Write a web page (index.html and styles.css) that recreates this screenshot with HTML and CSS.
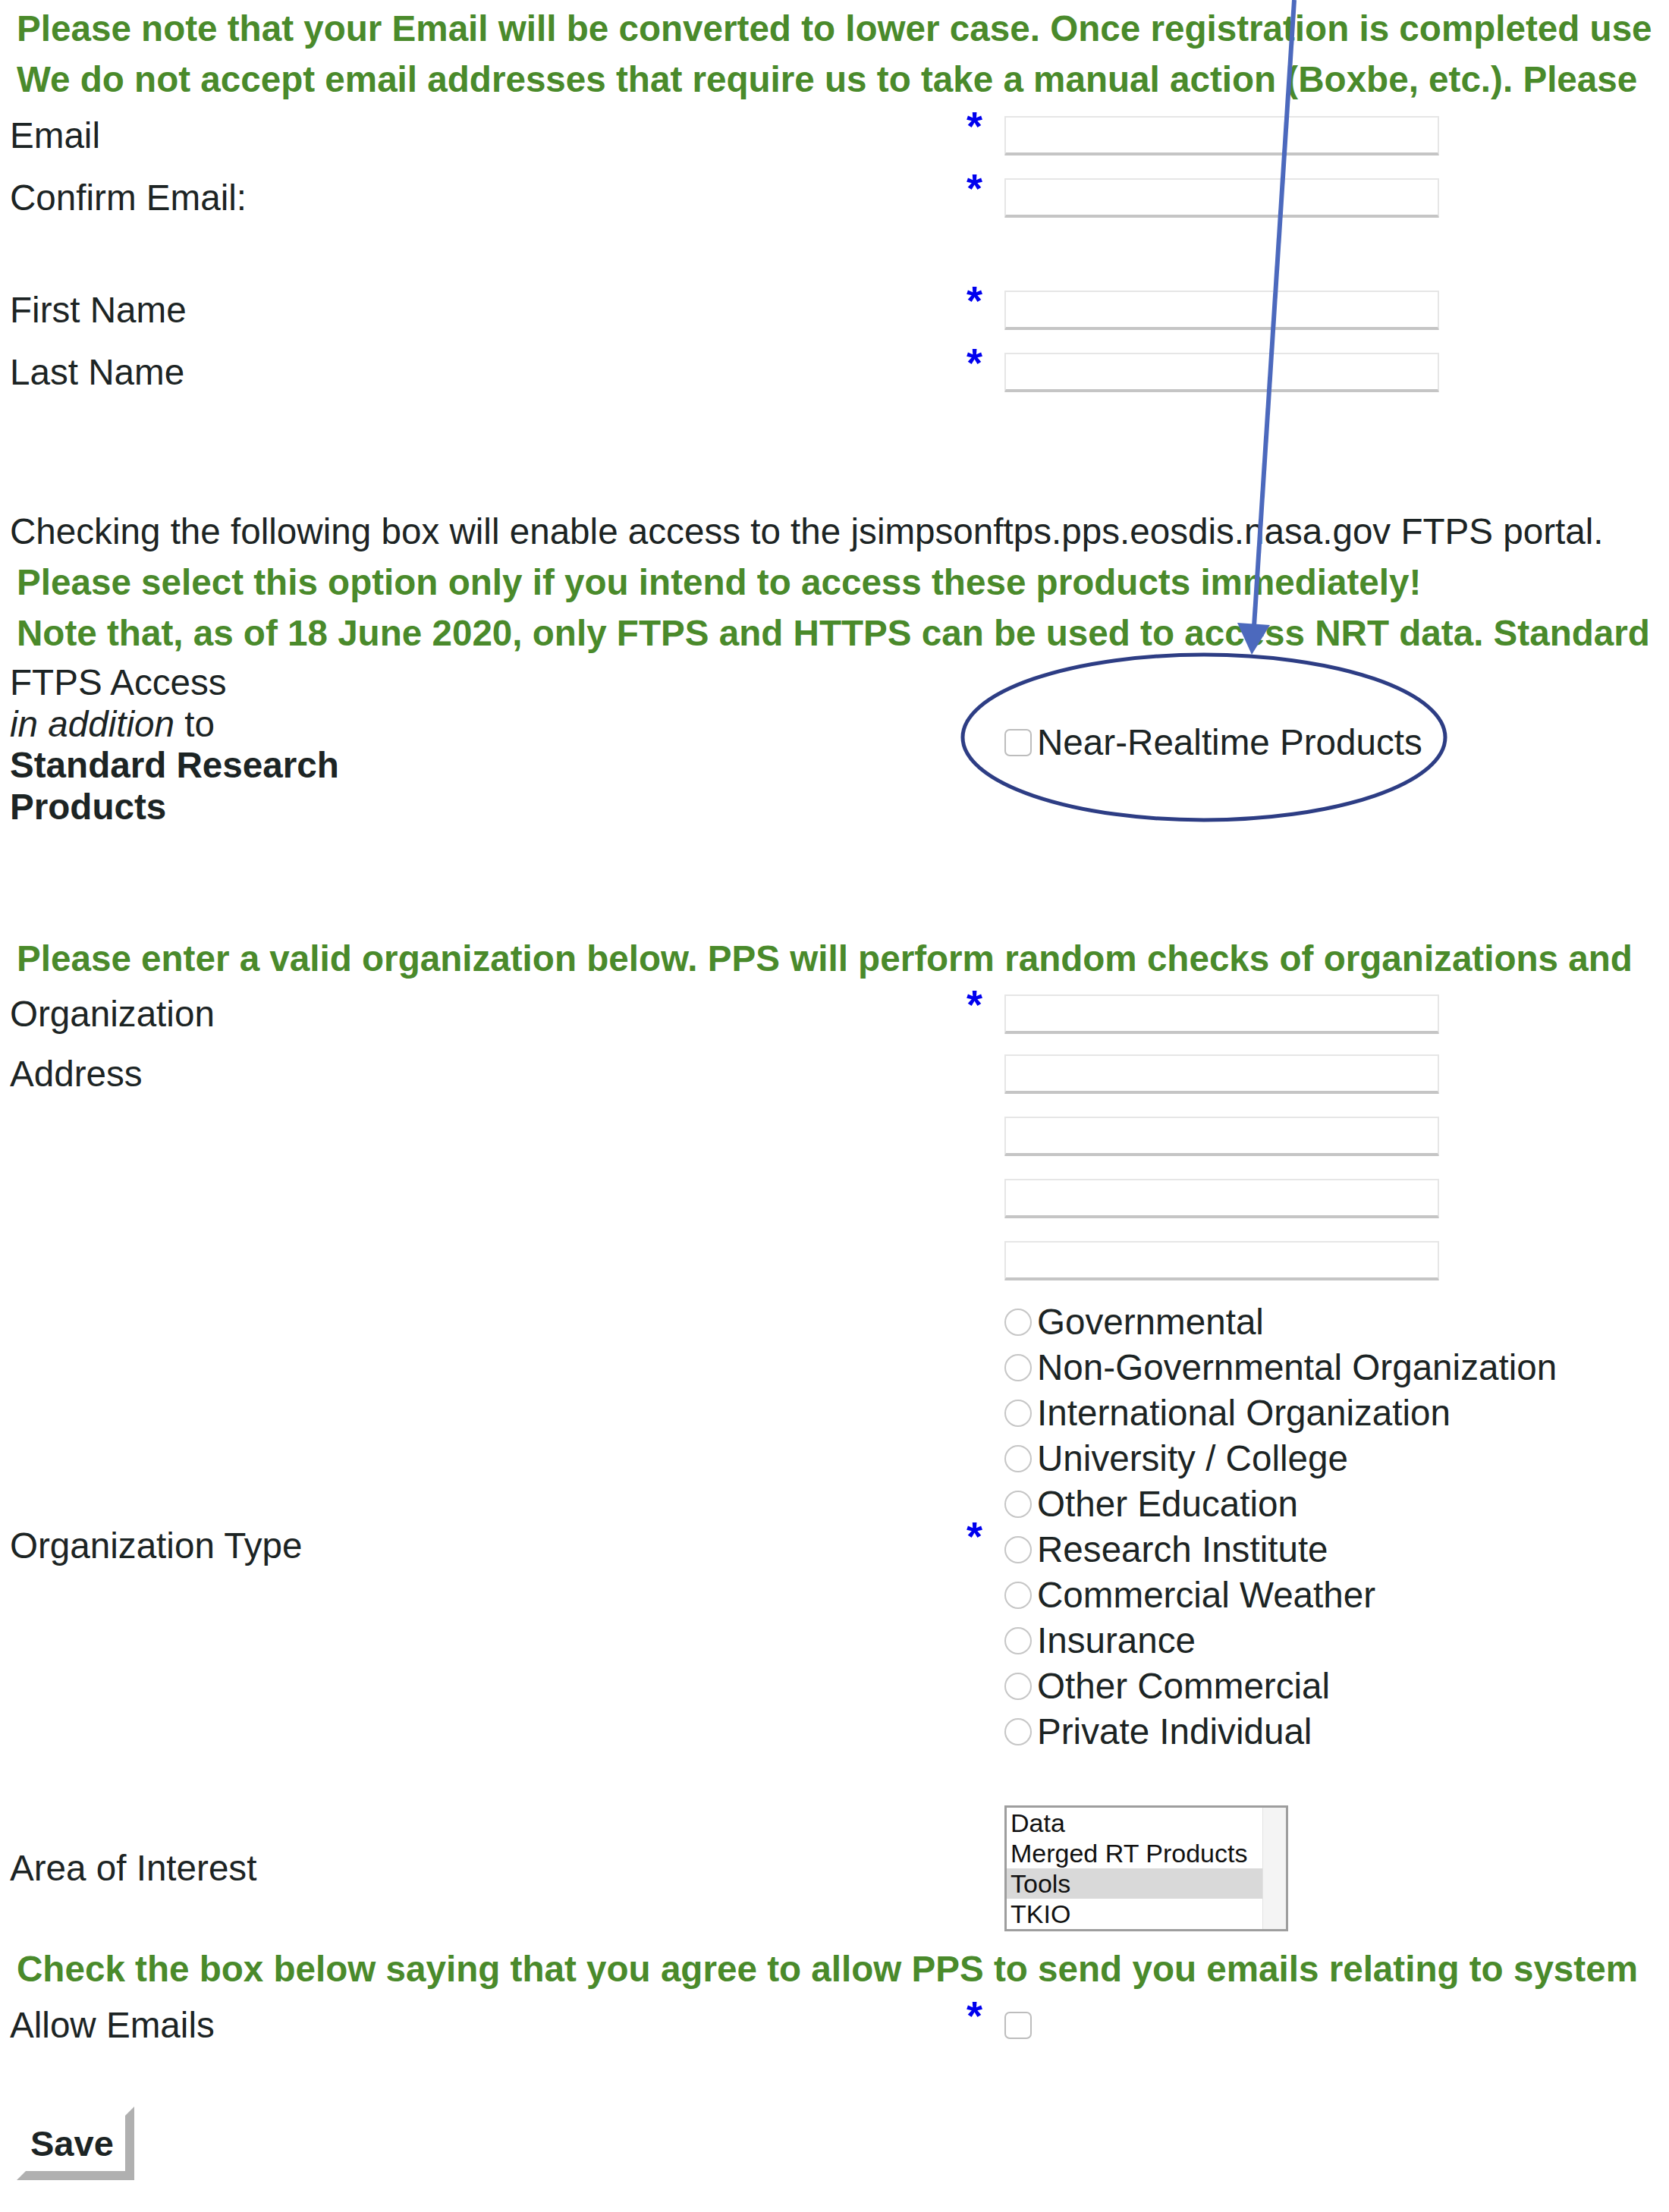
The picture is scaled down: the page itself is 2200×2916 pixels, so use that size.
FILE: index.html
```html
<!DOCTYPE html>
<html lang="en">
<head>
<meta charset="utf-8">
<title>Registration</title>
<link rel="stylesheet" href="styles.css">
</head>
<body>
<form class="page">
  <p class="note">Please note that your Email will be converted to lower case. Once registration is completed use</p>
  <p class="note">We do not accept email addresses that require us to take a manual action (Boxbe, etc.). Please</p>

  <div class="row row-field">
    <div class="label">Email</div>
    <div class="req">*</div>
    <div class="field"><input class="text-input" type="text"></div>
  </div>
  <div class="row row-field">
    <div class="label">Confirm Email:</div>
    <div class="req">*</div>
    <div class="field"><input class="text-input" type="text"></div>
  </div>

  <div class="row row-field gap-66">
    <div class="label">First Name</div>
    <div class="req">*</div>
    <div class="field"><input class="text-input" type="text"></div>
  </div>
  <div class="row row-field">
    <div class="label">Last Name</div>
    <div class="req">*</div>
    <div class="field"><input class="text-input" type="text"></div>
  </div>

  <p class="plain gap-135">Checking the following box will enable access to the jsimpsonftps.pps.eosdis.nasa.gov FTPS portal.</p>
  <p class="note">Please select this option only if you intend to access these products immediately!</p>
  <p class="note">Note that, as of 18 June 2020, only FTPS and HTTPS can be used to access NRT data. Standard</p>

  <div class="row row-ftps">
    <div class="label label-multi">FTPS Access<br><i>in addition</i> to<br><b>Standard Research</b><br><b>Products</b></div>
    <div class="req-empty"></div>
    <div class="field field-ftps"><label class="choice"><input class="box" type="checkbox">Near-Realtime Products</label></div>
  </div>

  <p class="note gap-139">Please enter a valid organization below. PPS will perform random checks of organizations and</p>

  <div class="row row-org">
    <div class="label">Organization</div>
    <div class="req">*</div>
    <div class="field"><input class="text-input" type="text"></div>
  </div>
  <div class="row row-address">
    <div class="label label-address">Address</div>
    <div class="req-empty"></div>
    <div class="field field-stack">
      <input class="text-input" type="text">
      <input class="text-input" type="text">
      <input class="text-input" type="text">
      <input class="text-input" type="text">
    </div>
  </div>

  <div class="row row-type">
    <div class="label">Organization Type</div>
    <div class="req">*</div>
    <div class="field radio-list">
      <label class="choice radio-line"><input class="dot" type="radio" name="orgtype">Governmental</label>
      <label class="choice radio-line"><input class="dot" type="radio" name="orgtype">Non-Governmental Organization</label>
      <label class="choice radio-line"><input class="dot" type="radio" name="orgtype">International Organization</label>
      <label class="choice radio-line"><input class="dot" type="radio" name="orgtype">University / College</label>
      <label class="choice radio-line"><input class="dot" type="radio" name="orgtype">Other Education</label>
      <label class="choice radio-line"><input class="dot" type="radio" name="orgtype">Research Institute</label>
      <label class="choice radio-line"><input class="dot" type="radio" name="orgtype">Commercial Weather</label>
      <label class="choice radio-line"><input class="dot" type="radio" name="orgtype">Insurance</label>
      <label class="choice radio-line"><input class="dot" type="radio" name="orgtype">Other Commercial</label>
      <label class="choice radio-line"><input class="dot" type="radio" name="orgtype">Private Individual</label>
    </div>
  </div>

  <div class="row row-area">
    <div class="label">Area of Interest</div>
    <div class="req-empty"></div>
    <div class="field">
      <div class="listbox">
        <ul class="options">
          <li>Data</li>
          <li>Merged RT Products</li>
          <li class="selected">Tools</li>
          <li>TKIO</li>
        </ul>
        <div class="scrolltrack"></div>
      </div>
    </div>
  </div>

  <p class="note">Check the box below saying that you agree to allow PPS to send you emails relating to system</p>

  <div class="row row-field">
    <div class="label">Allow Emails</div>
    <div class="req">*</div>
    <div class="field"><input class="box" type="checkbox"></div>
  </div>

  <button class="save" type="button">Save</button>
</form>

<svg class="annot" width="2200" height="1100" viewBox="0 0 2200 1100" aria-hidden="true">
  <line x1="1706" y1="0" x2="1653" y2="826" stroke="#4c69bd" stroke-width="6"/>
  <polygon points="1631,821 1674,824 1650,863" fill="#4c69bd"/>
  <ellipse cx="1587" cy="972" rx="318" ry="109" fill="none" stroke="#2d3d84" stroke-width="5"/>
</svg>
</body>
</html>
```

FILE: styles.css
```css
* {
  box-sizing: border-box;
}

html,
body {
  margin: 0;
  padding: 0;
  background: #ffffff;
}

body {
  position: relative;
  width: 2200px;
  height: 2916px;
  overflow: hidden;
  font-family: "Liberation Sans", Arial, Helvetica, sans-serif;
  font-size: 47.6px;
  color: #1c2424;
}

.page {
  display: block;
  margin: 0;
  padding: 4px 0 0 13px;
}

.note {
  margin: 0;
  padding-left: 9px;
  font-weight: bold;
  font-size: 47.6px;
  line-height: 67px;
  color: #4a8a2b;
  white-space: nowrap;
}

.plain {
  margin: 0;
  line-height: 67px;
  white-space: nowrap;
}

.gap-66 {
  margin-top: 66px;
}

.gap-135 {
  margin-top: 135px;
}

.gap-139 {
  margin-top: 139px;
}

.row {
  display: grid;
  grid-template-columns: 1268px 43px 1fr;
  align-items: center;
}

.row-field {
  height: 82px;
}

.row-org {
  height: 78px;
}

.row-address {
  align-items: start;
}

.row-ftps {
  padding-top: 5px;
}

.field-ftps {
  margin-top: -6px;
}

.row-area {
  padding: 7px 0 16px;
}

.label {
  line-height: 54px;
  white-space: nowrap;
}

.label-multi {
  line-height: 54.5px;
}

.label-address {
  line-height: 82px;
}

.req {
  justify-self: start;
  margin: 0 0 26px -7px;
  color: #0000ee;
  font-weight: bold;
  font-size: 54px;
  line-height: 54px;
}

.field {
  display: flex;
  align-items: center;
}

.field-stack {
  flex-direction: column;
  align-items: flex-start;
  gap: 30px;
  padding: 15px 0;
}

.text-input {
  display: block;
  width: 573px;
  height: 52px;
  margin: 0;
  padding: 0;
  background: #ffffff;
  border: 2px solid #e6e6e6;
  border-bottom: 4px solid #c5c5c5;
  border-radius: 1px;
  font: inherit;
}

.choice {
  display: flex;
  align-items: center;
  white-space: nowrap;
  line-height: 54px;
}

.box {
  appearance: none;
  -webkit-appearance: none;
  display: block;
  width: 36px;
  height: 36px;
  margin: 0 7px 0 0;
  background: #ffffff;
  border: 2px solid #bdbdbd;
  border-radius: 7px;
}

.radio-list {
  flex-direction: column;
  align-items: flex-start;
  padding: 10px 0 60px;
}

.radio-line {
  height: 60px;
}

.dot {
  appearance: none;
  -webkit-appearance: none;
  display: block;
  width: 36px;
  height: 36px;
  margin: 0 7px 0 0;
  background: #ffffff;
  border: 2px solid #c6c6c6;
  border-radius: 50%;
}

.listbox {
  display: flex;
  width: 374px;
  height: 166px;
  border: 3px solid #9e9e9e;
  background: #ffffff;
}

.options {
  flex: 1;
  margin: 0;
  padding: 0;
  list-style: none;
  font-size: 34px;
  line-height: 40px;
  color: #111111;
}

.options li {
  height: 40px;
  padding-left: 5px;
  white-space: nowrap;
}

.options .selected {
  background: #d9d9d9;
}

.scrolltrack {
  width: 31px;
  background: #f4f4f4;
  border-left: 1px solid #e3e3e3;
}

.save {
  display: block;
  height: 97px;
  margin: 66px 0 0 9px;
  padding: 0 15px 0 6px;
  background: #ffffff;
  border-style: solid;
  border-width: 12px;
  border-color: #ffffff #b0b0b0 #b0b0b0 #ffffff;
  font-family: "Liberation Sans", Arial, Helvetica, sans-serif;
  font-weight: bold;
  font-size: 47px;
  line-height: 73px;
  color: #1c2424;
}

.annot {
  position: absolute;
  top: 0;
  left: 0;
  pointer-events: none;
}
```
